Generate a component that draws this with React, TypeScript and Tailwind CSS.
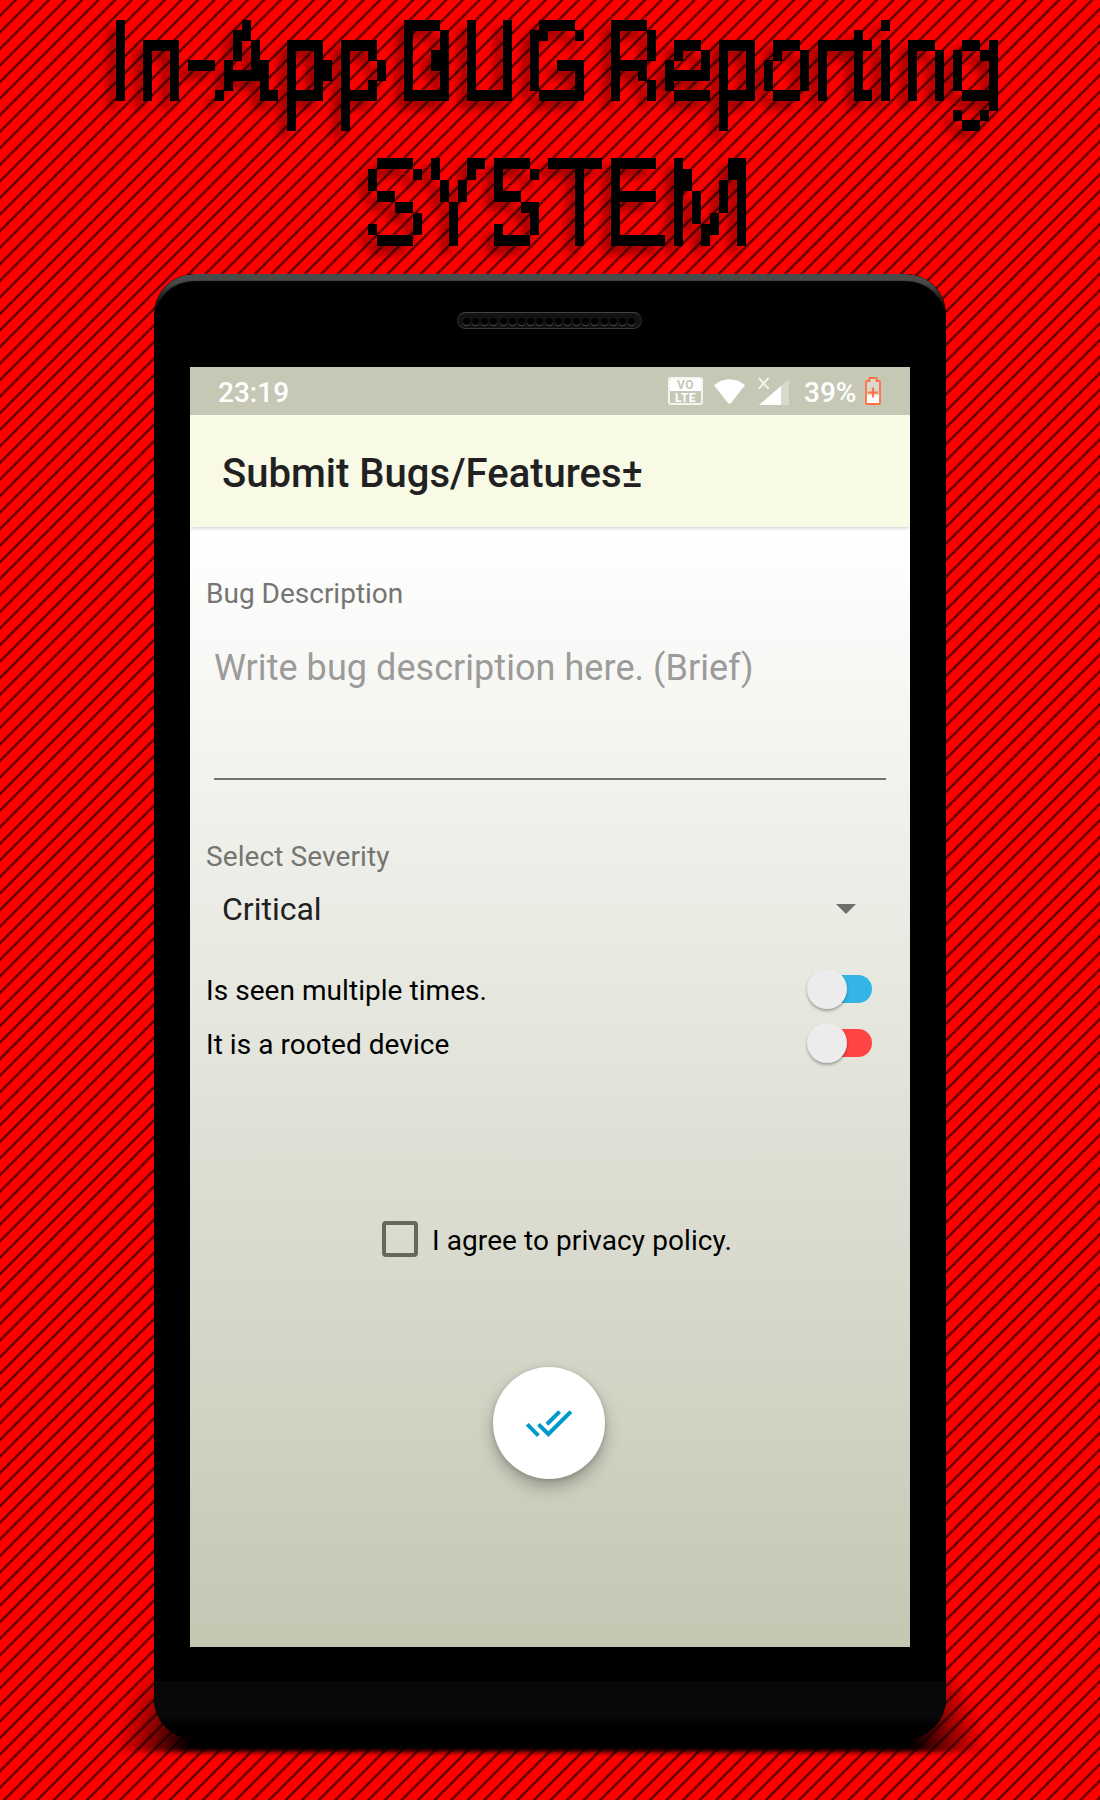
import React from "react";
import { MdDoneAll } from "react-icons/md";

/* Blocky look for the headline: samples the text on a coarse grid. */
function PixelFilters() {
  return (
    <svg className="absolute size-0" aria-hidden="true">
      <filter id="pixel-sm" filterUnits="userSpaceOnUse" x="0" y="0" width="1100" height="150" colorInterpolationFilters="sRGB">
        <feFlood x="3" y="5" width="1" height="1" floodColor="#000" result="dot" />
        <feOffset in="dot" dx="0" dy="0" x="0" y="0" width="9" height="10" />
        <feTile x="0" y="0" width="1100" height="150" result="grid" />
        <feComposite in="SourceGraphic" in2="grid" operator="in" />
        <feComponentTransfer>
          <feFuncA type="discrete" tableValues="0 1" />
        </feComponentTransfer>
        <feMorphology operator="dilate" radius="4 5" />
      </filter>
      <filter id="pixel-lg" filterUnits="userSpaceOnUse" x="0" y="0" width="1100" height="160" colorInterpolationFilters="sRGB">
        <feFlood x="3" y="3" width="1" height="1" floodColor="#000" result="dot" />
        <feOffset in="dot" dx="0" dy="0" x="0" y="0" width="9" height="11" />
        <feTile x="0" y="0" width="1100" height="160" result="grid" />
        <feComposite in="SourceGraphic" in2="grid" operator="in" />
        <feComponentTransfer>
          <feFuncA type="discrete" tableValues="0 1" />
        </feComponentTransfer>
        <feMorphology operator="dilate" radius="4 5" />
      </filter>
    </svg>
  );
}

function Title() {
  return (
    <header className="h-[274px] w-full text-black">
      <h1>
        <span className="flex h-[127px] pl-[108px] text-[115.3px] leading-[127px] whitespace-nowrap [filter:url(#pixel-sm)_drop-shadow(-8px_8px_5px_rgba(0,0,0,0.4))] [-webkit-text-stroke:0.8px_#000]">
          <span className="mr-[-52.7px] block w-[340px] shrink-0 origin-left scale-x-[0.84]">In-App</span>
          <span className="mr-[-23.3px] block w-[235px] shrink-0 origin-left scale-x-[0.87] [-webkit-text-stroke:0px_#000]">BUG</span>
          <span className="mr-[-30px] block w-[510px] shrink-0 origin-left scale-x-[0.788]">Reporting</span>
        </span>
        <span className="flex h-[147px] pl-[363px] text-[126.6px] leading-[153px] whitespace-nowrap [filter:url(#pixel-lg)_drop-shadow(-8px_8px_5px_rgba(0,0,0,0.4))]">
          <span className="block w-[490px] shrink-0 origin-left scale-x-[0.808]">SYSTEM</span>
        </span>
      </h1>
    </header>
  );
}

const holes = Array.from({ length: 19 }, (_, i) => i);

function Speaker() {
  return (
    <div className="mx-auto flex h-[17px] w-[185px] -translate-x-px items-center justify-center gap-[2.2px] rounded-full border border-[#2c2c2c] border-t-[#444] border-b-[#3a3a3a] bg-[#131313] pt-[2px]">
      {holes.map((n) => (
        <span key={n} className="size-[7px] shrink-0 rounded-full bg-black shadow-[0_1px_0_#4a4a4a]" />
      ))}
    </div>
  );
}

function StatusBar() {
  return (
    <div className="flex h-12 items-center bg-[#c6c7b5] pr-[29px] pl-7 text-[28px] font-medium text-white">
      <span className="pt-[3px]">23:19</span>
      <span className="ml-auto flex h-[28px] w-[35px] flex-col overflow-hidden rounded-[3px] border-2 border-[#f4f4ef] text-center text-[12px] leading-[12px] font-bold tracking-[0.5px]">
        <span className="h-[12px] bg-white leading-[13px] text-[#c6c7b5]">VO</span>
        <span className="h-[12px] leading-[14px]">LTE</span>
      </span>
      <svg className="ml-[11px] h-[25px] w-[31px]" viewBox="0 0 31 25" fill="#fff">
        <path d="M0 6.2C4.3 2.4 9.8.3 15.5.3S26.7 2.4 31 6.2L17 24Q15.500 25.600 14 24Z" />
      </svg>
      <svg className="ml-[13px] h-[29px] w-[31px]" viewBox="0 0 31 29">
        <path d="M31 2v26H1z" fill="#d9dacd" />
        <path d="M23 9v19H1z" fill="#fff" />
        <path d="M.8.8l9.800 11M10.600.8L.8 11.800" stroke="#f3f3ec" strokeWidth="2" fill="none" />
      </svg>
      <span className="ml-[15px] w-[53px] pt-[3px]">39%</span>
      <svg className="ml-[8px] h-[28px] w-[16px]" viewBox="0 0 16 28">
        <path d="M1 4h3.500V1h7v3H15v23H1z" fill="#d9dacd" />
        <path d="M1 18h14v9H1z" fill="#fff" />
        <path d="M2 4h2.500V1h7v3H14q1 0 1 1v21q0 1-1 1H2q-1 0-1-1V5q0-1 1-1z" fill="none" stroke="#ff7043" strokeWidth="1.800" />
        <path d="M8 10.500v10M3 15.500h10" stroke="#ff7043" strokeWidth="2.200" />
      </svg>
    </div>
  );
}

function Toggle({ track }: { track: string }) {
  return (
    <button type="button" role="switch" aria-checked={false} className="flex h-10 w-[65px] items-center">
      <span className="z-10 size-10 shrink-0 rounded-full bg-[#ececec] shadow-[0_2px_3px_rgba(0,0,0,0.3)]" />
      <span className={"-ml-5 h-7 w-[45px] shrink-0 rounded-r-[14px] " + track} />
    </button>
  );
}

function SwitchRow({ label, track }: { label: string; track: string }) {
  return (
    <div className="flex h-[54px] items-center justify-between pr-[38px] pl-4">
      <span className="pt-[3px] tracking-[0.05px]">{label}</span>
      <Toggle track={track} />
    </div>
  );
}

function Screen() {
  return (
    <main className="mx-auto h-[1280px] w-[720px] text-[28px] leading-8 text-black">
      <StatusBar />
      <div className="relative flex h-28 items-center bg-[#f9fae5] pt-[6px] pl-8 text-[40px] leading-none font-medium text-[#212121] shadow-[0_1px_4px_rgba(0,0,0,0.2)] [clip-path:inset(0_0_-8px_0)]">
        Submit Bugs/Features±
      </div>
      <form className="flex h-[1120px] flex-col bg-linear-to-b from-white to-[#c5c7b3] pt-[51px]">
        <label className="pl-4 text-[#757573]">Bug Description</label>
        <div className="mx-6 mt-[38px] h-[132px] border-b-2 border-[#72726f] text-[36px] leading-10 tracking-[0.05px] text-[#9b9b99]">
          Write bug description here. (Brief)
        </div>
        <label className="mt-[61px] pl-4 tracking-[0.1px] text-[#757571]">Select Severity</label>
        <div className="mt-[16px] flex h-10 items-center justify-between pr-[54px] pl-8 text-[32px] leading-10 text-[#20201f]">
          Critical
          <svg className="h-[10px] w-[20px]" viewBox="0 0 20 10" fill="#6f706c">
            <path d="M0 0h20L10 10z" />
          </svg>
        </div>
        <div className="mt-[33px]">
          <SwitchRow label="Is seen multiple times." track="bg-[#33b5e5]" />
          <SwitchRow label="It is a rooted device" track="bg-[#ff4444]" />
        </div>
        <div className="mt-[149px] flex h-10 items-center pl-[192px]">
          <span className="size-9 rounded-[4px] border-4 border-[#67675e]" />
          <span className="pt-[3px] pl-[14px] tracking-[0.08px]">I agree to privacy policy.</span>
        </div>
        <button
          type="button"
          className="mt-[108px] ml-[303px] flex size-28 shrink-0 items-center justify-center rounded-full bg-white text-[#0099cc] shadow-[0_8px_16px_rgba(0,0,0,0.27),0_1px_4px_rgba(0,0,0,0.16)]"
        >
          <MdDoneAll size={48} />
        </button>
      </form>
    </main>
  );
}

function FloorShadow() {
  return (
    <div className="absolute inset-x-[-50px] bottom-[-13px] flex h-[125px] blur-[2.5px]">
      <div className="w-[120px] bg-[radial-gradient(ellipse_120px_125px_at_right_bottom,#000_30%,rgba(0,0,0,0.45)_62%,transparent_92%)]" />
      <div className="-mx-px flex-1 bg-black" />
      <div className="w-[120px] bg-[radial-gradient(ellipse_120px_125px_at_left_bottom,#000_30%,rgba(0,0,0,0.45)_62%,transparent_92%)]" />
    </div>
  );
}

export default function App() {
  return (
    <div className="h-[1800px] w-[1100px] overflow-hidden bg-[repeating-linear-gradient(135deg,#3c0000_11.1px,#ff0000_13px,#ff0000_20.91px,#3c0000_22.81px)] font-[Roboto,sans-serif]">
      <PixelFilters />
      <Title />
      <div className="relative mx-auto h-[1465px] w-[792px]">
        <FloorShadow />
        <div className="relative h-full overflow-hidden rounded-[40px] bg-black">
          <div className="pointer-events-none absolute inset-x-0 top-0 h-20 rounded-t-[40px] shadow-[inset_0_7px_1px_#4a4a4a] [mask-image:linear-gradient(#000_8px,transparent_38px)]" />
          <div className="h-[93px] pt-[38px]">
            <Speaker />
          </div>
          <Screen />
          <div className="mt-[34px] h-[58px] bg-linear-to-b from-[#080808] from-60% to-black" />
        </div>
      </div>
    </div>
  );
}
